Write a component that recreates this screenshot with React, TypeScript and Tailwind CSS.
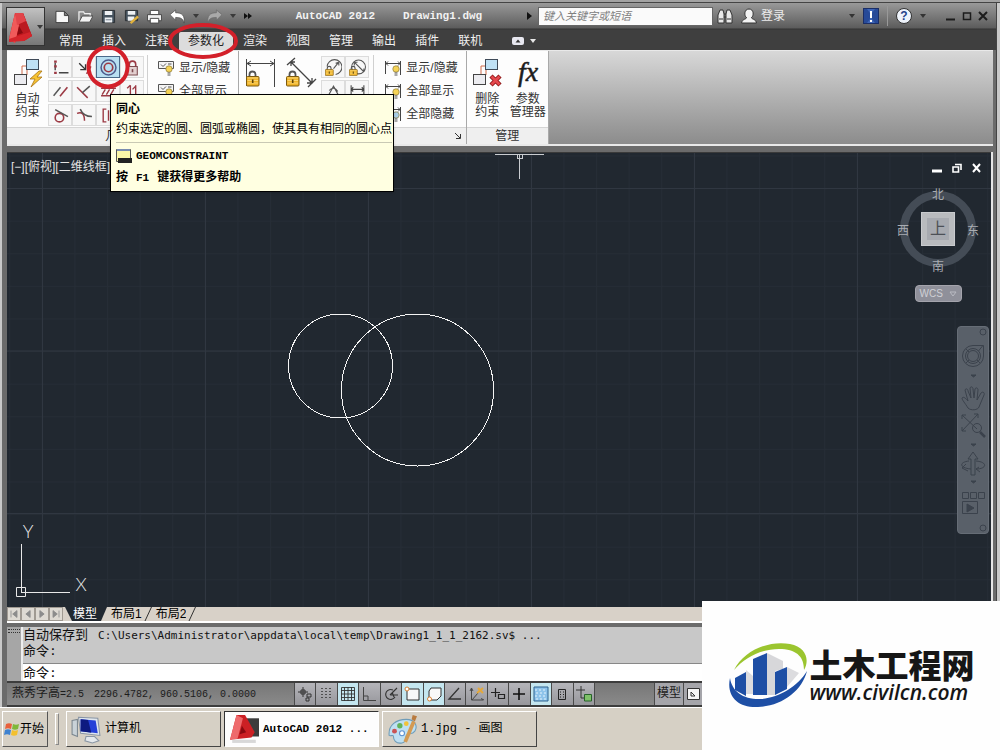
import React from "react";

const ribbonTabs = ["常用", "插入", "注释", "参数化", "渲染", "视图", "管理", "输出", "插件", "联机"];
const activeTab = "参数化";

type IconProps = { className?: string; children?: React.ReactNode; box?: string };

const Svg = ({ className = "h-4 w-4", box = "0 0 16 16", children }: IconProps) => (
  <svg viewBox={box} className={`block shrink-0 ${className}`} fill="none" aria-hidden="true">
    {children}
  </svg>
);

const Caret = ({ className = "text-[#3a3a3a]" }: { className?: string }) => (
  <Svg box="0 0 6 4" className={`h-1 w-1.5 ${className}`}>
    <path d="M0 0h6L3 4z" fill="currentColor" />
  </Svg>
);

const Padlock = ({ x, y, s = 1 }: { x: number; y: number; s?: number }) => (
  <g transform={`translate(${x} ${y}) scale(${s})`}>
    <path d="M3.500 7V4.500a3 3 0 0 1 6 0V7" stroke="#555" strokeWidth="1.800" />
    <rect x="0.500" y="6.500" width="12.500" height="9.500" rx="1" fill="#f0b429" stroke="#7c5a10" />
    <path d="M1.500 8h10.500M1.500 10.500h10.500M1.500 13h10.500" stroke="#fbe08a" strokeWidth="0.800" />
    <path d="M6.700 9.500v3.500" stroke="#5b430b" strokeWidth="1.600" />
  </g>
);

/* Quick access toolbar */
const quickAccess = [
  {
    name: "新建",
    icon: <path d="M1 2.500h9l4.500 4.500v7.500H1z M10 2.500v4.500h4.500" fill="#f7f7f7" stroke="#3c3c3c" />,
  },
  {
    name: "打开",
    icon: (
      <>
        <path d="M1 13.500V3h5l1 2h6v3" fill="#8a8a8a" stroke="#f0f0f0" strokeWidth="1.300" />
        <path d="M1 14L4.500 7.500H16L12.500 14z" fill="#f3f3f3" stroke="#444" />
      </>
    ),
  },
  {
    name: "保存",
    icon: (
      <>
        <path d="M1.500 1.500h13v13h-13z" fill="#45525e" stroke="#2b2f33" />
        <path d="M4 2h8v4.500H4zM4 9h8v5.500H4z" fill="#eef1f4" />
        <path d="M5 11.500h6" stroke="#6b7885" />
      </>
    ),
  },
  {
    name: "另存为",
    icon: (
      <>
        <path d="M1.500 1.500h13v11h-13z" fill="#45525e" stroke="#2b2f33" />
        <path d="M4 2h8v4H4zM4 8h7v4.500H4z" fill="#eef1f4" />
        <path d="M7 15l8-7" stroke="#e0b13c" strokeWidth="2.500" />
      </>
    ),
  },
  {
    name: "打印",
    icon: (
      <>
        <path d="M3.500 1.500h9V6h-9z" fill="#fff" stroke="#444" />
        <path d="M0.500 6h15v6.500h-15z" fill="#efefef" stroke="#444" />
        <path d="M3.500 10h9v5h-9z" fill="#fff" stroke="#444" />
      </>
    ),
  },
];

/* Geometric constraint buttons, row by row */
const red = "#9c3a44";
const geoIcons: React.ReactNode[] = [
  <>
    <path d="M3 3.500v7M6.500 13h9" stroke="#444" strokeWidth="1.300" />
    <path d="M2 2.500h2.500M2 7h2.500M2 13h2.500" stroke={red} strokeWidth="2.200" />
  </>,
  <>
    <path d="M3 4l6 6M9 5v5H4" stroke="#333" strokeWidth="1.300" />
    <path d="M10 14l4-7" stroke={red} strokeWidth="1.500" />
  </>,
  <>
    <circle cx="8" cy="8" r="7" stroke="#4d5a8c" strokeWidth="1.400" />
    <circle cx="8" cy="8" r="4" stroke={red} strokeWidth="1.600" />
  </>,
  <>
    <path d="M5 7V5a3 3 0 0 1 6 0v2" stroke={red} strokeWidth="1.500" />
    <path d="M3.500 7h9v8h-9z" stroke="#7d4a4f" fill="#e3cfcf" />
    <path d="M8 9.500v3" stroke="#7d4a4f" strokeWidth="1.500" />
  </>,
  <>
    <path d="M1.500 12L8 4" stroke="#555" strokeWidth="1.400" />
    <path d="M7.500 12.500L14.500 4" stroke={red} strokeWidth="1.500" />
  </>,
  <>
    <path d="M1 4l10 10" stroke={red} strokeWidth="1.400" />
    <path d="M6 9l7-6" stroke="#555" strokeWidth="1.400" />
  </>,
  <path d="M1 5h14M2 11l3-5M6 11l3-5M10 11l3-5M1 12h13" stroke={red} strokeWidth="1.300" />,
  <path d="M6 2v12M11 2v12M3 5l3-3M8 6l3-3M3 13h3" stroke={red} strokeWidth="1.300" />,
  <>
    <circle cx="7" cy="10" r="4" stroke={red} strokeWidth="1.500" />
    <path d="M3 2.500L15 9" stroke="#555" strokeWidth="1.400" />
  </>,
  <>
    <path d="M1 6c5-2 7 1 7 7" stroke={red} strokeWidth="1.400" />
    <path d="M4 2c2 5 5 7 11 7" stroke="#555" strokeWidth="1.400" />
  </>,
  <path d="M6 2H3v12h3M10 2h3v12h-3M8 3v10" stroke={red} strokeWidth="1.300" />,
  <path d="M3 5h10M3 11h10" stroke={red} strokeWidth="1.500" />,
];

const dimIcons: React.ReactNode[] = [
  <>
    <path d="M2 7a7 7 0 1 1 8 7.500M8 9l5-6M13 3l-3 1M13 3v3" stroke="#555" />
    <Padlock x={0} y={6} s={0.600} />
  </>,
  <>
    <circle cx="9" cy="7.500" r="6.500" stroke="#555" />
    <path d="M5 3l9 9M5 3h3M5 3v3M14 12v-3" stroke="#555" />
    <Padlock x={0} y={6} s={0.600} />
  </>,
  <path d="M2 14L8 3l6 11M4 7c2-3 6-3 8 1" stroke="#555" />,
  <path d="M2 2v13M14 2v13M2 6h12M4 4L2 6l2 2M12 4l2 2-2 2" stroke="#444" />,
];

const IconCell = ({ icon, label, active }: { icon: React.ReactNode; label: string; active?: boolean }) => (
  <button
    aria-label={label}
    className={`flex h-[22px] items-center justify-center border ${
      active ? "border-[#4a6a8a] bg-[#b9e0f2]" : "border-[#dcdcdc] bg-[#f7f7f7]"
    }`}
  >
    <Svg className="h-[17px] w-[17px]">{icon}</Svg>
  </button>
);

const visibility = ["显示/隐藏", "全部显示", "全部隐藏"];

const VisibilityList = ({ dimension }: { dimension?: boolean }) => (
  <div className="flex flex-col gap-px pt-1.5">
    {visibility.map((label, i) => (
      <button key={label} className="flex h-[22px] items-center gap-1 whitespace-nowrap">
        <Svg className="h-[18px] w-[18px]" box="0 0 18 18">
          {dimension ? (
            <path d="M1.500 2v13M16.500 2v14M2 4.500h14M4 2.500L2 4.500l2 2M14 2.500l2 2-2 2" stroke="#444" />
          ) : (
            <path d="M1.500 2.500h15v7h-15zM4 5.500l2 2 3-3M11 5h3.500" stroke="#555" fill="#f4f4f4" />
          )}
          <circle cx="12" cy="10" r="3.200" fill={i === 2 ? "#a9cde6" : "#f5d356"} stroke="#8b7a3a" strokeWidth="0.700" />
          <path d="M10.500 14h3M10.500 16h3" stroke="#555" />
        </Svg>
        {label}
      </button>
    ))}
  </div>
);

type BigButtonProps = { icon: React.ReactNode; label?: string; lines?: string[]; width: string };

const BigButton = ({ icon, label, lines = [], width }: BigButtonProps) => (
  <button aria-label={label} className={`flex flex-col items-center pt-1.5 leading-[13px] ${width}`}>
    <Svg className="mb-1 h-8 w-8" box="0 0 32 32">
      {icon}
    </Svg>
    {lines.map((line) => (
      <span key={line}>{line}</span>
    ))}
  </button>
);

const blocks = (
  <>
    <path d="M10 17V9h4M15 13v5" stroke="#cf6a4a" />
    <rect x="14.500" y="2.500" width="12" height="10" fill="#bfe1f5" stroke="#3f4a58" />
    <rect x="2.500" y="17.500" width="12" height="10" fill="#ececf0" stroke="#444" />
  </>
);

type PanelProps = { title: string; align?: string; launcher?: boolean; children: React.ReactNode };

function Panel({ title, align = "text-center", launcher, children }: PanelProps) {
  return (
    <section className="flex flex-col border-r border-[#a9a9a9] bg-[#fdfdfd]">
      <div className="flex flex-1">{children}</div>
      <h2 className={`relative h-[17px] border-t border-[#d5d5d5] bg-[#efefef] leading-4 ${align}`}>
        {title}
        {launcher && (
          <Svg className="absolute right-1 bottom-1 h-2 w-2" box="0 0 8 8">
            <path d="M1 1l5 5M6.500 2v4.500H2" stroke="#333" />
          </Svg>
        )}
      </h2>
    </section>
  );
}

function Header() {
  return (
    <header className="flex bg-[linear-gradient(#999_0px,#5c5c5c_25px,#333_26px,#3f3f3f_27px)] pl-1">
      <button
        aria-label="应用程序菜单"
        className="mt-1 flex h-[39px] w-[39px] items-center border border-[#333] bg-linear-to-b from-[#c2c2c2] to-[#777]"
      >
        <Svg className="h-9 w-[30px]" box="0 0 30 36">
          <path d="M2 30L8 4h8l9 23-8 5-3-4-5 2-1 4z" fill="#c4161c" />
          <path d="M2 30L8 4l7 1-3 12-4 17z" fill="#f05a5a" />
          <path d="M8 4h8l9 23-9 2z" fill="#bb1a20" />
          <path d="M8 4h8l3 8-9 4z" fill="#e2454a" />
          <path d="M12 17l4 7-6 2z" fill="#8a0a10" />
          <path d="M2 30l21-7 2 4-8 5-15 1z" fill="#d4252b" />
        </Svg>
        <Caret />
      </button>
      <div className="min-w-0 flex-1">
        {/* Title bar */}
        <div className="flex h-[26px] items-center pl-2.5">
          <div className="flex items-center gap-2">
            {quickAccess.map((item) => (
              <button key={item.name} aria-label={item.name}>
                <Svg className="h-[15px] w-[15px]">{item.icon}</Svg>
              </button>
            ))}
            <button aria-label="放弃" className="flex items-center gap-2">
              <Svg className="h-[15px] w-[15px]">
                <path d="M0 6l6-5v3c7 0 10 3 9 11-1-5-4-6-9-6v3z" fill="#fff" stroke="#444" strokeWidth="0.700" />
              </Svg>
              <Caret />
            </button>
            <button aria-label="重做" className="flex items-center gap-2">
              <Svg className="h-[15px] w-[15px]">
                <path d="M16 6l-6-5v3C3 4 0 7 1 15c1-5 4-6 9-6v3z" fill="#a9a9a9" stroke="#666" strokeWidth="0.700" />
              </Svg>
              <Caret />
            </button>
            <Svg className="h-2 w-2" box="0 0 8 8">
              <path d="M0 1l4 3-4 3zM4 1l4 3-4 3z" fill="#111" />
            </Svg>
          </div>
          <h1 className="flex flex-1 justify-center gap-7 font-['Liberation_Mono','Noto_Sans_CJK_SC',monospace] text-[11px] font-bold whitespace-nowrap text-[#f2f2f2]">
            <span>AutoCAD 2012</span>
            <span>Drawing1.dwg</span>
          </h1>
          <Svg className="mr-1.5 h-2 w-1.5" box="0 0 6 8">
            <path d="M1 0l5 4-5 4z" fill="#111" />
          </Svg>
          <input
            aria-label="搜索"
            placeholder="键入关键字或短语"
            className="h-[19px] w-[175px] border border-[#666] bg-[#fafafa] px-1 text-[11px] italic placeholder:text-[#808080]"
          />
          <button aria-label="查找" className="ml-1">
            <Svg>
              <path d="M1 7l2-5h3l1 4v9H1zM15 7l-2-5h-3L9 6v9h6z" fill="#e8e8e8" stroke="#333" />
              <path d="M7 6h2M7 9h2M2 11h4M10 11h4" stroke="#333" />
            </Svg>
          </button>
          <button className="ml-2 flex items-center gap-1 text-[#ececec]">
            <Svg>
              <path d="M8 1c5 0 5 7 2.500 8.500 0 2 4 1 5 5.500H.5c1-4.500 5-3.500 5-5.500C3 8 3 1 8 1z" fill="#f3f3f3" stroke="#333" />
            </Svg>
            登录
          </button>
          <div className="flex items-center pl-16">
            <Caret className="text-[#333]" />
            <button aria-label="Exchange" className="ml-2 border border-[#1b2e66] bg-[#3f66b8]">
              <Svg className="h-3.5 w-3.5" box="0 0 14 14">
                <path d="M0 0h3l3 4v6l-3 4H0zM14 0h-3L8 4v6l3 4h3z" fill="#274a98" />
                <path d="M7 2v7M7 11v2" stroke="#fff" strokeWidth="2" />
              </Svg>
            </button>
            <span className="mx-2 h-5 w-px bg-[#999]" />
            <button aria-label="帮助" className="flex items-center gap-2">
              <span className="flex h-4 w-4 items-center justify-center rounded-full border border-[#333] bg-[#eef3fb] text-[12px] font-bold text-[#24428a]">
                ?
              </span>
              <Caret className="text-[#333]" />
            </button>
            <div className="ml-5 flex gap-1.5 pr-2">
              <button aria-label="最小化">
                <Svg className="h-2.5 w-2.5" box="0 0 10 10">
                  <path d="M0 8.500h9" stroke="#1c1c1c" strokeWidth="2" />
                </Svg>
              </button>
              <button aria-label="最大化">
                <Svg className="h-2.5 w-2.5" box="0 0 10 10">
                  <path d="M1.500 2h7v6.500h-7z" stroke="#1c1c1c" strokeWidth="1.500" />
                </Svg>
              </button>
              <button aria-label="关闭">
                <Svg className="h-2.5 w-2.5" box="0 0 10 10">
                  <path d="M1 1l8 8M9 1L1 9" stroke="#1c1c1c" strokeWidth="2" />
                </Svg>
              </button>
            </div>
          </div>
        </div>
        {/* Ribbon tabs */}
        <nav className="flex h-[21px] items-end gap-px pl-[5px]">
          {ribbonTabs.map((tab) => (
            <button
              key={tab}
              className={`h-[18px] px-[9px] leading-4 whitespace-nowrap ${
                tab === activeTab ? "rounded-t-xs bg-[#dcdcdc] text-[#222]" : "text-[#f0f0f0]"
              }`}
            >
              {tab}
            </button>
          ))}
          <button aria-label="最小化功能区" className="flex h-[18px] items-center gap-1.5 pl-5">
            <Svg className="h-2 w-3" box="0 0 12 8">
              <rect width="12" height="8" rx="2" fill="#e8e8f0" />
              <path d="M3.500 5.500h5L6 2.500z" fill="#333" />
            </Svg>
            <Caret className="text-[#e8e8e8]" />
          </button>
        </nav>
      </div>
    </header>
  );
}

function Ribbon() {
  return (
    <div className="flex h-24 border-t border-b-2 border-[#e9e9e9] bg-linear-to-b from-[#d8d8d8] to-[#8c8c8c] text-[#333]">
      <Panel title="几何" align="pl-[98px]">
        <BigButton
          width="w-[41px]"
          lines={["自动", "约束"]}
          icon={
            <>
              {blocks}
              <path d="M27 14l-9 8h5l-4 8 11-10h-5l5-6z" fill="#f7c331" stroke="#a87314" strokeWidth="0.800" />
            </>
          }
        />
        <div className="mt-[5px] grid w-24 grid-cols-4 content-start gap-y-0.5">
          {geoIcons.map((icon, i) => (
            <IconCell key={i} icon={icon} label={`几何约束 ${i + 1}`} active={i === 2} />
          ))}
        </div>
        <div className="mx-[3px] my-1 w-px bg-[#d0d0d0]" />
        <div className="pr-2 pl-1.5">
          <VisibilityList />
        </div>
      </Panel>
      <Panel title="" launcher>
        <BigButton
          width="w-[42px]"
          label="线性"
          icon={
            <>
              <path d="M2.500 2v27M30.500 2v28M3 6.500h27M7 4L3 6.500 7 9M26 4l4 2.500-4 2.500" stroke="#444" />
              <Padlock x={2} y={13} />
            </>
          }
        />
        <BigButton
          width="w-10"
          label="对齐"
          icon={
            <>
              <path d="M2 8l8-7M23 30l8-8M6 5l21 21M6 9V5h4M22 26h5v-5" stroke="#444" strokeWidth="1.300" />
              <Padlock x={1} y={13} />
            </>
          }
        />
        <div className="mt-[5px] grid w-12 grid-cols-2 content-start gap-y-0.5">
          {dimIcons.map((icon, i) => (
            <IconCell key={i} icon={icon} label={`标注约束 ${i + 1}`} />
          ))}
        </div>
        <div className="mx-1 my-1 w-px bg-[#d0d0d0]" />
        <div className="pr-2 pl-1.5">
          <VisibilityList dimension />
        </div>
      </Panel>
      <Panel title="管理">
        <BigButton
          width="w-[41px]"
          lines={["删除", "约束"]}
          icon={
            <>
              {blocks}
              <path d="M20 19l9 9M29 19l-9 9" stroke="#8c1313" strokeWidth="4.500" />
              <path d="M20.500 19.500l8 8M28.500 19.500l-8 8" stroke="#e5484d" strokeWidth="2.800" />
            </>
          }
        />
        <BigButton
          width="w-10"
          lines={["参数", "管理器"]}
          icon={
            <text x="16" y="24" textAnchor="middle" fontSize="28" fontStyle="italic" fontFamily="Liberation Serif, serif" fill="#1d1d1d" stroke="#1d1d1d" strokeWidth="0.500">
              fx
            </text>
          }
        />
      </Panel>
    </div>
  );
}

/* View cube with compass */
function ViewCube() {
  return (
    <div className="absolute top-9 right-[11px] flex w-[84px] flex-col items-center">
      <div className="relative h-[84px] w-[84px] text-[12px] leading-3 text-[#a9adb3]">
        <svg viewBox="0 0 84 84" className="h-full w-full" aria-hidden="true">
          <circle cx="42" cy="40" r="34" fill="none" stroke="#444c56" strokeWidth="8" />
          <rect x="25.500" y="23.500" width="33" height="33" fill="#b9bbbe" stroke="#c9cbce" />
          <rect x="31" y="29" width="22" height="22" fill="#a7aab0" />
        </svg>
        <span className="absolute top-0 left-9">北</span>
        <span className="absolute top-9 left-px">西</span>
        <span className="absolute top-9 right-px">东</span>
        <span className="absolute bottom-0 left-9">南</span>
        <span className="absolute inset-x-0 top-6 text-center text-base leading-8 text-[#4c5056]">上</span>
      </div>
      <button className="mt-3 flex h-[17px] w-[47px] items-center justify-between rounded-[4px] border border-[#a4a4ac] bg-[#8f909a] px-1 text-[10px] text-[#cfd0d6]">
        WCS
        <Svg className="h-1.5 w-2" box="0 0 8 6">
          <path d="M1 1h6L4 5z" stroke="#b9bac2" />
        </Svg>
      </button>
    </div>
  );
}

function NavBar() {
  return (
    <div className="absolute top-[173px] right-0.5 rounded-[4px] border border-[#666d76] bg-[#596069]">
      <svg viewBox="0 0 30 206" className="block h-[206px] w-[30px]" fill="none" stroke="#3b424c" aria-hidden="true">
        <circle cx="25" cy="5" r="3" />
        <circle cx="25" cy="201" r="3" />
        <path d="M15 18.500h10.500V29a10.500 10.500 0 1 1-10.500-10.500z" />
        <circle cx="15" cy="29" r="5.500" />
        <circle cx="15" cy="29" r="7.500" />
        <path d="M20.500 24l4-5M8 36l3-3M19 33l3 3M8 22l3 3" />
        <path d="M13 48h5l-2.500 2zM13 117h5l-2.500 2zM13 154h5l-2.500 2z" fill="#3b424c" />
        <path d="M10 81c-3-5-6-8-6-10 2-2 4 1 6 3L7 63c1-2 3-1 3 1l3 7-1-10c1-2 3-1 3 1l1 9 1-9c1-2 3-1 3 1l-1 10 4-7c2-2 4 0 3 2l-5 12c-1 3-8 4-11 1z" />
        <path d="M4 88l15 14M20 87L4 104M4 92v-4h4M16 87h4v4M4 100v4h4" />
        <circle cx="19" cy="101" r="4.500" />
        <path d="M22 105l5 5" strokeWidth="2.500" />
        <path d="M13 148v-16h-3l5-7 5 7h-3v16z" />
        <path d="M11 134c-10 1-10 7 2 8M18 134c12 1 11 8 0 8M8 137l-4 4 6 3M21 140l-3 2 4 3" />
        <path d="M4.500 165.500h6v6h-6zM12.500 165.500h6v6h-6zM20.500 165.500h6v6h-6zM4.500 174.500h15v12h-15z" />
        <path d="M9 177l7 4-7 4z" fill="#3b424c" />
      </svg>
    </div>
  );
}

function Canvas() {
  return (
    <main className="relative flex-1 overflow-hidden border-t border-[#3a3a3a] bg-[#212830]">
      <svg className="absolute inset-0 h-full w-full" aria-label="绘图区">
        <defs>
          <pattern id="minor" width="32.6" height="32.6" patternUnits="userSpaceOnUse" x="2.200" y="2.500">
            <path d="M0.500 0v32.600M0 0.500h32.600" stroke="#262d36" fill="none" />
          </pattern>
          <pattern id="major" width="163" height="162.5" patternUnits="userSpaceOnUse" x="35" y="35">
            <path d="M0.500 0v162.500M0 0.500h163" stroke="#303741" fill="none" />
          </pattern>
        </defs>
        <rect width="100%" height="100%" fill="url(#minor)" />
        <rect width="100%" height="100%" fill="url(#major)" />
        <g fill="none" stroke="#f4f4f4" shapeRendering="crispEdges">
          <circle cx="333.5" cy="213" r="52" />
          <circle cx="410.5" cy="237" r="76" />
          <path d="M488 1.500h49M512.500 1v25M510.500 1.500h5v4h-5z" stroke="#c9ccd0" />
        </g>
      </svg>
      <p className="relative pt-1.5 pl-1 leading-4 text-[#e3e3e3]">[−][俯视][二维线框]</p>
      <div className="absolute top-2.5 right-[9px] flex gap-2.5">
        <Svg className="h-2.5 w-2.5" box="0 0 10 10">
          <path d="M0 8h10" stroke="#fff" strokeWidth="3" />
        </Svg>
        <Svg className="h-2.5 w-2.5" box="0 0 10 10">
          <path d="M1 4h5.500v5H1zM3 1.500h6V7" stroke="#fff" strokeWidth="1.600" />
        </Svg>
        <Svg className="h-2.5 w-2.5" box="0 0 10 10">
          <path d="M1 1l7 8M8 1L1 9" stroke="#fff" strokeWidth="2" />
        </Svg>
      </div>
      <ViewCube />
      <NavBar />
      {/* UCS icon */}
      <svg viewBox="0 -12 88 88" className="absolute bottom-0.5 left-2 h-[88px] w-[88px]" aria-label="UCS">
        <path d="M6.500 15v48M6 63.500h49M1.500 58.500h9v9h-9z" stroke="#e8e8e8" fill="none" />
        <g fill="#e8e8e8" fontFamily="Lato, sans-serif" fontWeight="300" fontSize="18" textAnchor="middle">
          <text x="13" y="9">Y</text>
          <text x="66" y="62">X</text>
        </g>
      </svg>
    </main>
  );
}

const Slash = ({ fill }: { fill: string }) => (
  <Svg className="h-3.5 w-2.5" box="0 0 10 14">
    <path d="M0 0h10L3 14H0z" fill={fill} />
    <path d="M9.500 0L3 14" stroke="#333" />
  </Svg>
);

function LayoutTabs() {
  return (
    <div className="flex h-4 border-b-2 border-white bg-[#d8d1c8] leading-3.5 text-black">
      {["M3 3v8M10 3L5 7l5 4z", "M9 3L4 7l5 4z", "M4 3l5 4-5 4z", "M10 3v8M3 3l5 4-5 4z"].map((d) => (
        <button key={d} aria-label="切换布局" className="border border-[#a09a92] bg-[#dedad3]">
          <Svg className="h-3 w-3" box="0 0 13 14">
            <path d={d} fill="#8c8c8c" stroke="#8c8c8c" />
          </Svg>
        </button>
      ))}
      <button className="ml-0.5 flex bg-[#212830] pl-2 text-white [clip-path:polygon(0_0,100%_0,100%_100%,7px_100%)]">
        <span>模型</span>
        <Svg className="h-3.5 w-2.5" box="0 0 10 14">
          <path d="M10 0v14H4z" fill="#d8d1c8" />
        </Svg>
      </button>
      {["布局1", "布局2"].map((name) => (
        <button key={name} className="flex pl-1">
          {name}
          <Slash fill="#d8d1c8" />
        </button>
      ))}
    </div>
  );
}

function CommandLine() {
  return (
    <div className="flex bg-[#a6a6a6] font-['DejaVu_Sans_Mono','Noto_Sans_CJK_SC',monospace] text-[11px] text-[#111]">
      <div className="w-[14px] pt-0.5 pl-px">
        <div className="h-1 w-3 border-y border-dotted border-[#333]" />
      </div>
      <div className="flex-1 border-l-2 border-[#eee] bg-[#c8c8c8]">
        <div className="h-[37px] border-b border-[#888] leading-[15px] whitespace-pre">
          <p>
            <span className="mr-2.5 text-[13px]">自动保存到</span>
            C:\Users\Administrator\appdata\local\temp\Drawing1_1_1_2162.sv$ ...
          </p>
          <p className="text-[13px]">命令:</p>
        </div>
        <div className="flex h-[17px] items-center bg-white">
          <label htmlFor="command" className="text-[13px]">
            命令:
          </label>
          <input id="command" className="h-4 w-3/5 pl-1 outline-none" />
        </div>
      </div>
    </div>
  );
}

const statusIcons: { on?: boolean; icon: React.ReactNode }[] = [
  { icon: <path d="M6 1v10M1 6h10M4 4h4v4H4zM10 8h4v3h-4zM9 12h3v3H9z" stroke="#333" /> },
  { icon: <path d="M3 2v12M7 2v12M11 2v12" stroke="#333" strokeDasharray="1 2" strokeWidth="1.500" /> },
  { on: true, icon: <path d="M1.500 1.500h13v13h-13zM4.500 1v14M8 1v14M11.500 1v14M1 4.500h14M1 8h14M1 11.500h14" stroke="#333" strokeWidth="0.900" /> },
  { icon: <path d="M2.500 1v13.500H15M3 10h4v4" stroke="#444" /> },
  { icon: <path d="M12 11a5 5 0 1 1-2-7M7 9l7-7M7 9h8M9 6l2 5" stroke="#333" strokeWidth="1.100" /> },
  {
    on: true,
    icon: (
      <>
        <path d="M3 3h12v11H3z" fill="#f8f8f8" stroke="#333" />
        <circle cx="3" cy="3" r="2" fill="#fff" stroke="#d98033" />
      </>
    ),
  },
  {
    on: true,
    icon: (
      <>
        <path d="M5 2h10v8l-4 4H3V5z" fill="#f8f8f8" stroke="#333" />
        <circle cx="3.500" cy="13" r="2" fill="#fff" stroke="#d98033" />
      </>
    ),
  },
  { icon: <path d="M12 2L2 13h12" stroke="#333" strokeWidth="1.300" /> },
  {
    icon: (
      <>
        <path d="M2.500 3v11H14M3 14l6-7M1 5l1.500-3L4 5M12 12.500l3 1.500" stroke="#444" />
        <path d="M8 7l6-5M9 2l5 5" stroke="#e5a83a" strokeWidth="2" />
      </>
    ),
  },
  { icon: <path d="M5.500 2v9M1 6.500h9M8.500 8.500h6v4h-6z" stroke="#222" strokeWidth="1.200" /> },
  { icon: <path d="M8 2v12M2 8h12" stroke="#111" strokeWidth="1.600" /> },
  {
    on: true,
    icon: (
      <>
        <path d="M1 1h14v14H1z" fill="#8dc3ea" stroke="#2f628f" />
        <path d="M2 4h12M3 7h12M2 10h12M3 13h11" stroke="#e4f3fd" strokeDasharray="2 2" />
      </>
    ),
  },
  { icon: <path d="M4.500 3.500h7v10h-7zM6 6h1M9 6h1M6 8.500h1M9 8.500h1M6 11h1M9 11h1" stroke="#222" /> },
  {
    icon: (
      <>
        <path d="M5 0v9M0 4h9M5 9v3h4" stroke="#333" />
        <path d="M8.500 8.500h7v6.500h-7z" fill="#7fc169" stroke="#27632a" />
      </>
    ),
  },
];

function StatusBar() {
  return (
    <footer className="flex h-[26px] items-stretch border-y-2 border-[#3d3d3d] bg-linear-to-b from-[#777] to-[#8a8a8a] font-['Liberation_Mono','Noto_Sans_CJK_SC',monospace] text-[10px] text-[#1c1c1c]">
      <div className="flex w-[287px] items-center gap-2.5 pl-[5px] whitespace-nowrap">
        <span>
          <span className="text-[12px]">燕秀字高</span>=2.5
        </span>
        <span>2296.4782, 960.5106, 0.0000</span>
      </div>
      <div className="grid w-[301px] grid-cols-[repeat(14,1fr)] border-l border-[#4a4a4a]">
        {statusIcons.map((item, i) => (
          <button
            key={i}
            aria-label={`状态切换 ${i + 1}`}
            className={`flex items-center justify-center border-r border-[#4a4a4a] ${
              item.on ? "bg-[#c4e6ef]" : "bg-linear-to-b from-[#b5b5ba] to-[#97979c]"
            }`}
          >
            <Svg>{item.icon}</Svg>
          </button>
        ))}
      </div>
      <div className="ml-[59px] flex border-l border-[#4a4a4a] bg-[#a5a5aa]">
        <button className="border-r border-[#4a4a4a] px-0.5 text-[12px]">模型</button>
        <button aria-label="布局" className="px-0.5">
          <Svg>
            <path d="M1.500 2.500h12v11h-12z" fill="#f4f4f4" stroke="#333" />
            <path d="M5 10V6l4 4z" stroke="#333" />
          </Svg>
        </button>
      </div>
    </footer>
  );
}

const tasks = [
  {
    label: "计算机",
    icon: (
      <>
        <path d="M1 6l5-1v16l-5-2z" fill="#c9d2d8" stroke="#7c8790" />
        <path d="M7 3l18 1 2 16-18-2z" fill="#dfe6ee" stroke="#8a96a5" />
        <path d="M9 5l14 1 2 12-16-2z" fill="#2440d8" />
        <path d="M9 5l7 .5 3 12-10-1.500z" fill="#0d1a80" />
        <path d="M14 21h8l4 4-6 2-7-2z" fill="#e4e8ec" stroke="#8a96a5" />
      </>
    ),
  },
  {
    label: "AutoCAD 2012 ...",
    active: true,
    icon: (
      <>
        <path d="M14 4h14v17H14z" fill="#3c3c3c" />
        <path d="M1 24L7 1h8l9 16-3 5-20 2z" fill="#cc2024" />
        <path d="M1 24L7 1l6 3-5 19z" fill="#ee6a6c" />
        <path d="M12 11l4 6-6 2z" fill="#8a0a10" />
        <path d="M3 24h22v3H3z" fill="#d8d8d8" />
      </>
    ),
  },
  {
    label: "1.jpg - 画图",
    icon: (
      <>
        <path d="M2 20C1 10 9 5 18 5c8 0 11 6 8 11-3 4-6 1-8 4-1 3 1 6-4 7-6 1-8-3-8-6 0-2-3 0-4-1z" fill="#bfe0f2" stroke="#6f9cb8" />
        <circle cx="12" cy="11" r="2.500" fill="#62b35a" />
        <circle cx="18" cy="9" r="2.200" fill="#f1c33a" />
        <circle cx="7" cy="16" r="2.300" fill="#c95454" />
        <circle cx="14" cy="18" r="2.300" fill="#fff" stroke="#5b8fd0" />
        <path d="M17 26l8-19" stroke="#d49a52" strokeWidth="3.500" />
        <path d="M23 5l1-4 4 1-2 5z" fill="#b97b3f" />
      </>
    ),
  },
];

function Taskbar() {
  return (
    <div className="flex h-[43px] items-center gap-[3px] border-t border-white bg-[#d6d0c5] pl-0.5 text-black">
      <button className="flex h-9 w-[46px] items-center border border-t-white border-r-[#555] border-b-[#555] border-l-white pl-px">
        <Svg className="h-4 w-4">
          <path d="M2 3c2-1 4-1 6 0L7 8C5 7 3 7 1 8z" fill="#e8603c" />
          <path d="M9 3c2 1 4 1 6 0l-1 5c-2 1-4 1-6 0z" fill="#7fb83a" />
          <path d="M1 9c2-1 4-1 6 0l-1 5c-2-1-4-1-6 0z" fill="#3f82d0" />
          <path d="M8 9c2 1 4 1 6 0l-1 5c-2 1-4 1-6 0z" fill="#f3c02f" />
        </Svg>
        <span className="whitespace-nowrap">开始</span>
      </button>
      <span className="mx-1 h-8 w-1 border border-t-white border-r-[#888] border-b-[#888] border-l-white" />
      {tasks.map((task) => (
        <button
          key={task.label}
          className={`flex h-9 w-[155px] items-center gap-1 border pl-1 font-['Liberation_Mono','Noto_Sans_CJK_SC',monospace] whitespace-nowrap ${
            task.active
              ? "border-t-[#333] border-r-white border-b-white border-l-[#333] bg-[#fdfdfd] text-[11px] font-bold"
              : "border-t-white border-r-[#444] border-b-[#444] border-l-white text-[12px]"
          }`}
        >
          <Svg className="h-[30px] w-[30px]" box="0 0 28 28">
            {task.icon}
          </Svg>
          {task.label}
        </button>
      ))}
    </div>
  );
}

function Tooltip() {
  return (
    <div
      role="tooltip"
      className="absolute top-[94px] left-[110px] border border-black bg-[#ffffe1] pt-1 pr-px pb-0.5 pl-[5px] whitespace-nowrap text-black shadow-sm"
    >
      <p className="leading-5 font-bold">同心</p>
      <p className="leading-5">约束选定的圆、圆弧或椭圆，使其具有相同的圆心点</p>
      <hr className="my-[3px] border-[#c9c9b4]" />
      <p className="flex items-center gap-1 font-['Liberation_Mono',monospace] text-[11px] leading-5 font-bold">
        <Svg>
          <path d="M0.500 1.500h14v12H.5z" fill="#fbf7a8" stroke="#555" />
          <path d="M1 2h13" stroke="#7a8db0" strokeWidth="2" />
          <path d="M2 10h14v5H2z" fill="#222" />
        </Svg>
        GEOMCONSTRAINT
      </p>
      <p className="leading-[22px] font-bold">
        按<span className="mx-2 font-['Liberation_Mono',monospace] text-[11px]">F1</span>键获得更多帮助
      </p>
    </div>
  );
}

function Watermark() {
  return (
    <div className="absolute right-0 bottom-0 flex h-[149px] w-[298px] items-center justify-center gap-0.5 bg-[#fefefe] text-[#161616]">
      <Svg className="h-[68px] w-20" box="0 0 80 68">
        <path d="M7 36l11-6v24l-11-6z" fill="#1e4fa5" />
        <path d="M18 28l7 6v18h-7z" fill="#dcdcdf" />
        <path d="M25 17l14-6v42H25z" fill="#1e4fa5" />
        <path d="M39 11l16 8v8l-8 2v24h-8z" fill="#d7d7da" />
        <path d="M47 30l12-5v22l-12 6z" fill="#1e4fa5" />
        <path d="M59 25l12 6-12 14z" fill="#dcdcdf" />
        <path d="M6 28C16 8 42-2 62 2c16 3 20 16 14 26 0-12-6-20-22-21C36 6 18 14 6 28z" fill="#9bc52f" />
        <path d="M2 36C-2 54 10 66 30 65c24-1 44-16 49-36C70 44 52 55 34 57 16 58 4 50 2 36z" fill="#1e4fa5" />
      </Svg>
      <div>
        <p className="font-['Noto_Sans_CJK_SC',sans-serif] text-[33px] leading-8 font-black">土木工程网</p>
        <p className="font-['Open_Sans',sans-serif] text-[21px] leading-6 font-semibold italic">www.civilcn.com</p>
      </div>
    </div>
  );
}

export default function App() {
  return (
    <div className="relative flex min-h-screen flex-col overflow-hidden bg-[#c9c9c9] font-['Liberation_Sans','Noto_Sans_CJK_SC',sans-serif] text-[12px]">
      <div className="h-[3px] border-b border-[#444] bg-[#a3a3a3]" />
      <div className="mr-[3px] ml-[2px] flex flex-1 flex-col border-r border-[#444] bg-[#6b6b6b]">
        <Header />
        <div className="mr-[3px] ml-[5px] flex flex-1 flex-col">
          <Ribbon />
          <div className="mt-1.5 flex flex-1 flex-col border-r-2 border-[#e6e6e6]">
            <Canvas />
            <LayoutTabs />
          </div>
          <div className="h-1" />
          <CommandLine />
          <StatusBar />
        </div>
      </div>
      <Taskbar />
      {/* Marker rings */}
      <svg viewBox="0 0 160 72" className="pointer-events-none absolute top-5 left-[80px] h-[72px] w-40" fill="none" aria-hidden="true">
        <ellipse cx="123" cy="21" rx="33" ry="16" stroke="#d3202a" strokeWidth="4" />
        <circle cx="28" cy="47" r="19.5" stroke="#d3202a" strokeWidth="4" />
      </svg>
      <Tooltip />
      <Watermark />
    </div>
  );
}
